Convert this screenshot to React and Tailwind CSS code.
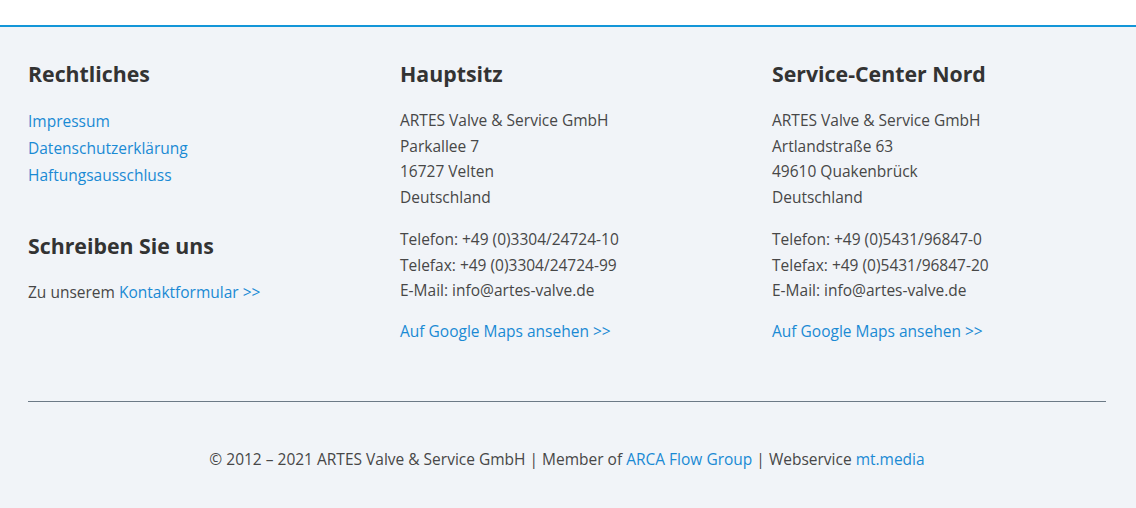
const Link = ({ children }) => (
    <a href="#" className="text-[#1a8ad4] hover:underline">
        {children}
    </a>
);

const Address = ({ title, street, city }) => (
    <div>
        <h3 className="text-[21.3px] font-bold text-[#333] leading-[28px] mb-[20px]">{title}</h3>
        <p className="mb-[16px]">
            ARTES Valve &amp; Service GmbH<br />
            {street}<br />
            {city}<br />
            Deutschland
        </p>
        {/* Kontakt */}
        {title === 'Hauptsitz' ? (
            <p className="mb-[15px]">
                Telefon: +49 (0)3304/24724-10<br />
                Telefax: +49 (0)3304/24724-99<br />
                E-Mail: info@artes-valve.de
            </p>
        ) : (
            <p className="mb-[15px]">
                Telefon: +49 (0)5431/96847-0<br />
                Telefax: +49 (0)5431/96847-20<br />
                E-Mail: info@artes-valve.de
            </p>
        )}
        <p><Link>Auf Google Maps ansehen &gt;&gt;</Link></p>
    </div>
);

export default function App() {
    return (
        <div className="w-[1136px] h-[508px] bg-white" style={{ fontFamily: '"Open Sans", "Noto Sans", sans-serif' }}>
            <div className="h-[25px] bg-white" />
            <div className="h-[2px] bg-[#1396d8]" />
            <footer className="bg-[#f1f4f8] h-[481px] px-[28px] pt-[33px] text-[15.5px] leading-[25.7px] text-[#474747]">
                <div className="grid grid-cols-3 w-[1116px] h-[341px]">
                    <div>
                        <h3 className="text-[21.3px] font-bold text-[#333] leading-[28px] mb-[20px]">Rechtliches</h3>
                        <ul className="leading-[27px] mb-[43px]">
                            <li><Link>Impressum</Link></li>
                            <li><Link>Datenschutzerklärung</Link></li>
                            <li><Link>Haftungsausschluss</Link></li>
                        </ul>
                        <h3 className="text-[21.3px] font-bold text-[#333] leading-[28px] mb-[20px]">Schreiben Sie uns</h3>
                        <p>Zu unserem <Link>Kontaktformular &gt;&gt;</Link></p>
                    </div>
                    <Address title="Hauptsitz" street="Parkallee 7" city="16727 Velten" />
                    <Address title="Service-Center Nord" street="Artlandstraße 63" city="49610 Quakenbrück" />
                </div>
                <div className="border-t border-[#6c7a86] w-[1078px]" />
                <p className="text-center mt-[45px] w-[1078px]">
                    © 2012 – 2021 ARTES Valve &amp; Service GmbH | Member of <Link>ARCA Flow Group</Link> | Webservice <Link>mt.media</Link>
                </p>
            </footer>
        </div>
    );
}
